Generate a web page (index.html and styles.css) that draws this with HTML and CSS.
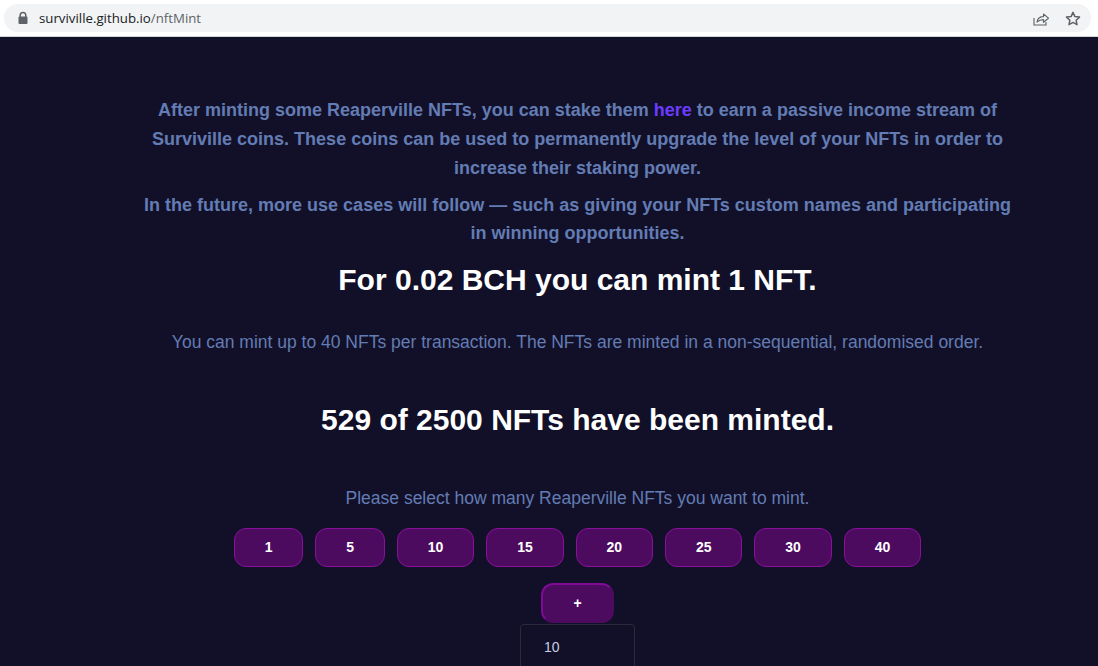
FILE: index.html
```html
<!DOCTYPE html>
<html lang="en">
<head>
<meta charset="utf-8">
<title>Surviville NFT Mint</title>
<link rel="stylesheet" href="styles.css">
</head>
<body>
<header class="chrome">
  <div class="omnibox">
    <svg class="lock" width="12" height="14" viewBox="0 0 12 14"><path d="M3.2 6V4.200a2.800 2.800 0 0 1 5.600 0V6" fill="none" stroke="#5f6368" stroke-width="1.500"/><rect x="1.500" y="5.500" width="9" height="7.500" rx="1" fill="#5f6368"/></svg>
    <span class="url">surviville.github.io<span class="url-path">/nftMint</span></span>
    <svg class="action share" width="16" height="15" viewBox="0 0 16 15"><path d="M1 7v7h12v-3" fill="none" stroke="#5f6368" stroke-width="1.100"/><path d="M4 11c.6-3.600 3.400-5.400 6.500-5.400V3l5 4.200-5 4.100V8.600C8 8.600 5.800 9.300 4 11z" fill="none" stroke="#5f6368" stroke-width="1.100" stroke-linejoin="round"/></svg>
    <svg class="action star" width="16" height="15" viewBox="0 0 16 15"><path d="M8 1.400l1.900 4.200 4.600.5-3.400 3.100.9 4.500L8 11.400l-4 2.300.9-4.500L1.500 6.100l4.600-.5z" fill="none" stroke="#5f6368" stroke-width="1.500" stroke-linejoin="round"/></svg>
  </div>
</header>
<main class="page">
  <p class="lead lead-first">After minting some Reaperville NFTs, you can stake them <a class="link" href="#">here</a> to earn a passive income stream of Surviville coins. These coins can be used to permanently upgrade the level of your NFTs in order to increase their staking power.</p>
  <p class="lead lead-second">In the future, more use cases will follow — such as giving your NFTs custom names and participating in winning opportunities.</p>
  <h2 class="headline price">For 0.02 BCH you can mint 1 NFT.</h2>
  <p class="note limit">You can mint up to 40 NFTs per transaction. The NFTs are minted in a non-sequential, randomised order.</p>
  <h2 class="headline count">529 of 2500 NFTs have been minted.</h2>
  <p class="note select">Please select how many Reaperville NFTs you want to mint.</p>
  <div class="amounts">
    <button class="btn narrow">1</button>
    <button class="btn narrow">5</button>
    <button class="btn">10</button>
    <button class="btn">15</button>
    <button class="btn">20</button>
    <button class="btn">25</button>
    <button class="btn">30</button>
    <button class="btn">40</button>
  </div>
  <button class="btn plus">+</button>
  <div class="dropdown"><span class="dropdown-item">10</span></div>
</main>
</body>
</html>
```
FILE: styles.css
```css
* { box-sizing: border-box; }
html, body { margin: 0; padding: 0; height: 100%; overflow: hidden; }
body { background: #121028; font-family: "Liberation Sans", Arial, sans-serif; }

.chrome { height: 37px; background: #fff; border-bottom: 1px solid #d5d6d8; padding: 4px 7px 4px 4px; }
.omnibox { height: 28px; border-radius: 14px; background: #f1f3f4; display: flex; align-items: center; padding: 0 10px 0 13px; }
.lock { flex: none; margin-right: 10px; margin-top: -1px; }
.url { font-family: "Open Sans", sans-serif; font-size: 13.250px; color: #202124; flex: 1; }
.url-path { color: #5f6368; }
.action { flex: none; }
.share { margin-right: 16px; }

.page { padding: 0 0 0 57px; text-align: center; display: flex; flex-direction: column; align-items: center; }
.lead { margin: 0; width: 875px; font-size: 18px; font-weight: 700; color: #637cb4; }
.lead-first { padding-top: 59px; line-height: 29px; }
.lead-second { margin-top: 8px; line-height: 28px; }
.link { color: #6b3cff; text-decoration: none; }
.headline { margin: 0; font-size: 30px; font-weight: 700; color: #fff; line-height: 36px; }
.price { margin-top: 15px; }
.count { margin-top: 48px; }
.note { margin: 0; font-size: 17.500px; color: #637cb4; line-height: 24px; }
.limit { margin-top: 32px; }
.select { margin-top: 48px; }

.amounts { display: flex; justify-content: center; gap: 12px; margin-top: 18px; }
.btn { width: 77.400px; height: 39px; border: 1px solid #8a0f9c; border-radius: 12px; background: #4d0b60; color: #fff; font: 700 14px "Liberation Sans", Arial, sans-serif; padding: 0 0 1px; }
.narrow { width: 69.500px; }
.plus { width: 73px; height: 40px; margin-top: 16px; border-width: 2px; border-color: #7e0a96 #4d0b60 #4d0b60 #7e0a96; }
.dropdown { width: 115px; height: 60px; margin-top: 1px; border: 1px solid #2a2a3c; border-radius: 4px; text-align: left; padding: 13px 0 0 23px; }
.dropdown-item { color: #c6cfe6; font-size: 14px; }
```
